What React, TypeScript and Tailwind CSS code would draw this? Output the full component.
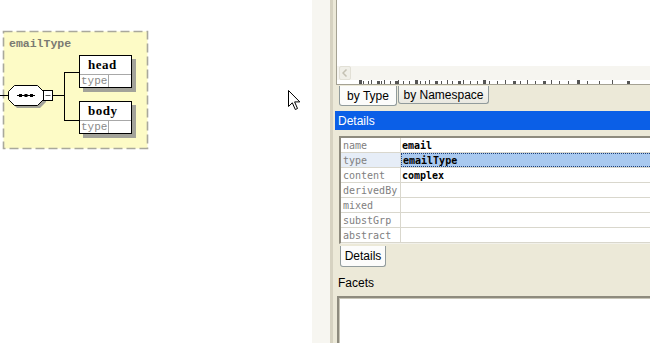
import React from "react";

const rows = [
  { key: "name", value: "email" },
  { key: "type", value: "emailType", selected: true },
  { key: "content", value: "complex" },
  { key: "derivedBy", value: "" },
  { key: "mixed", value: "" },
  { key: "substGrp", value: "" },
  { key: "abstract", value: "" },
];

// clipped glyph tops peeking under the scroll bar
const marks = [
  22, 26, 31, 34, 40, 44, 47, 53, 58, 61, 66, 72, 78, 83, 88, 92, 98, 104, 110, 115, 121, 126, 133, 140, 146, 152, 160, 168, 176, 183, 190, 198, 206, 214, 222, 231, 240, 250, 262, 275, 290,
];

function ElementBox({ name, top }: { name: string; top: number }) {
  return (
    <div
      className="absolute left-[79px] flex h-[33px] w-[53px] flex-col border border-black bg-white shadow-[4px_4px_0_#a3a39a]"
      style={{ top }}
    >
      <div className="h-[18px] pl-[8px] font-['Liberation_Serif',serif] text-[13px] font-bold leading-[18px] tracking-[0.5px] text-black">
        {name}
      </div>
      <div className="flex h-[13px] border-t border-[#a8a8a8]">
        <div className="w-[29px] border-r border-[#a8a8a8] pl-[1px] font-['Liberation_Mono',monospace] text-[11px] leading-[12px] text-[#8a8a8a]">
          type
        </div>
        <div className="flex-1" />
      </div>
    </div>
  );
}

function Diagram() {
  return (
    <div className="relative h-full w-[312px] shrink-0 bg-white">
      <svg className="absolute inset-0" width="312" height="343">
        <rect x="3.5" y="31.5" width="144" height="117" fill="#fdfbc6" stroke="#a9a89c" strokeWidth="1.6" strokeDasharray="9 4" />
        <line x1="0" y1="95.5" x2="8" y2="95.5" stroke="#000" />
        <polygon points="17,88 40,88 46,94 46,102 40,108 17,108 11,102 11,94" fill="#a3a39a" />
        <polygon points="14.5,85.5 37.5,85.5 43.5,91.5 43.5,99.5 37.5,105.5 14.5,105.5 8.5,99.5 8.5,91.5" fill="#fff" stroke="#000" />
        <line x1="17" y1="95.5" x2="35" y2="95.5" stroke="#000" />
        <rect x="19" y="94" width="3" height="3" fill="#000" />
        <rect x="24.5" y="94" width="3" height="3" fill="#000" />
        <rect x="30" y="94" width="3" height="3" fill="#000" />
        <rect x="43.5" y="90.5" width="9" height="10" fill="#fff" stroke="#000" />
        <line x1="45.5" y1="95.5" x2="50.5" y2="95.5" stroke="#555" />
        <line x1="53" y1="95.5" x2="64" y2="95.5" stroke="#000" />
        <line x1="64.5" y1="72" x2="64.5" y2="121" stroke="#000" />
        <line x1="64" y1="72.5" x2="79" y2="72.5" stroke="#000" />
        <line x1="64" y1="120.5" x2="79" y2="120.5" stroke="#000" />
        {/* mouse pointer */}
        <path
          d="M288.5 90.5 L288.5 106.5 L292.3 102.8 L295.3 109.5 L297.5 108.5 L294.6 101.9 L299.8 101.9 Z"
          fill="#fff"
          stroke="#000"
          strokeLinejoin="miter"
        />
      </svg>
      <div className="absolute left-[9px] top-[37px] font-['Liberation_Mono',monospace] text-[11.5px] font-bold leading-[14px] text-[#7a7a72]">
        emailType
      </div>
      <ElementBox name="head" top={55} />
      <ElementBox name="body" top={101} />
    </div>
  );
}

function Panel() {
  return (
    <div className="flex min-w-0 flex-1 flex-col bg-[#ece9d8] font-['Liberation_Sans',Arial,sans-serif] text-[12px] text-black">
      {/* type tree view */}
      <div className="-mr-[4px] ml-[3px] flex h-[85px] shrink-0 flex-col border-b border-l border-[#a5a293] bg-white">
        <div className="flex-1" />
        <div className="flex h-[14px] shrink-0 bg-[#f6f5f0] pl-[2px]">
          <div className="flex w-[12px] items-center justify-center rounded-[2px] border border-[#e2e0d6] bg-[#f0efe8]">
            <svg width="6" height="8" viewBox="0 0 6 8">
              <path d="M4.5 0.5 L1 4 L4.5 7.5" fill="none" stroke="#c4c1b3" strokeWidth="1.5" />
            </svg>
          </div>
        </div>
        <svg className="shrink-0" width="320" height="4">
          {marks.map((x, i) => (
            <rect key={x} x={x} y={i % 3 === 0 ? 0 : 1} width={i % 4 === 0 ? 3 : 1} height={i % 3 === 0 ? 4 : 3} fill="#555" />
          ))}
        </svg>
      </div>

      {/* tabs */}
      <div className="ml-[6px] mt-[1px] flex items-start">
        <div className="flex h-[20px] w-[58px] items-center justify-center rounded-b-[3px] border border-t-0 border-[#919b9c] bg-[#fcfcfb]">
          by Type
        </div>
        <div className="ml-px flex h-[18px] w-[91px] items-center justify-center rounded-b-[3px] border border-t-0 border-[#919b9c] bg-gradient-to-t from-[#e9e8e0] to-[#f9f9f6]">
          by Namespace
        </div>
      </div>

      {/* Details header */}
      <div className="-mr-[4px] ml-[2px] mt-[5px] flex h-[19px] shrink-0 items-center bg-[#0b5fe7] pl-[3px] text-[12px] text-white">
        Details
      </div>

      {/* properties grid */}
      <div className="-mr-[4px] ml-[6px] mt-[6px] shrink-0 border-2 border-b-[1px] border-[#8e8b7e] border-b-[#f2f1ea] bg-white font-['DejaVu_Sans_Mono',monospace] text-[10px]">
        {rows.map((row) => (
          <div key={row.key} className="flex h-[15px] border-b border-[#d9d7cd]">
            <div
              className={`flex w-[60px] shrink-0 items-center border-r border-[#d9d7cd] pl-[2px] pt-[1px] text-[#808080] ${
                row.selected ? "bg-[#e6edf7]" : ""
              }`}
            >
              {row.key}
            </div>
            <div
              className={`flex flex-1 items-center pl-[1px] pt-[1px] font-bold ${
                row.selected ? "border border-dotted border-[#1f3f78] bg-[#a9c9ef]" : ""
              }`}
            >
              {row.value}
            </div>
          </div>
        ))}
      </div>

      {/* bottom tab */}
      <div className="ml-[7px] mt-[2px] flex">
        <div className="flex h-[21px] w-[46px] items-center justify-center rounded-b-[3px] border border-t-0 border-[#919b9c] bg-[#fcfcfb]">
          Details
        </div>
      </div>

      {/* Facets */}
      <div className="ml-[5px] mt-[8px] h-[16px] leading-[16px]">Facets</div>
      <div className="-mr-[4px] ml-[4px] mt-[5px] flex-1 border-l-2 border-t-2 border-[#8e8b7e] bg-white shadow-[inset_1px_1px_0_#c9c6b8]" />
    </div>
  );
}

export default function App() {
  return (
    <div className="flex h-[343px] w-[650px] overflow-hidden bg-white">
      <Diagram />
      <div className="w-[18px] shrink-0 bg-[#f7f6f1]" />
      <div className="w-[3px] shrink-0 bg-[#d6d2c1]" />
      <Panel />
    </div>
  );
}
